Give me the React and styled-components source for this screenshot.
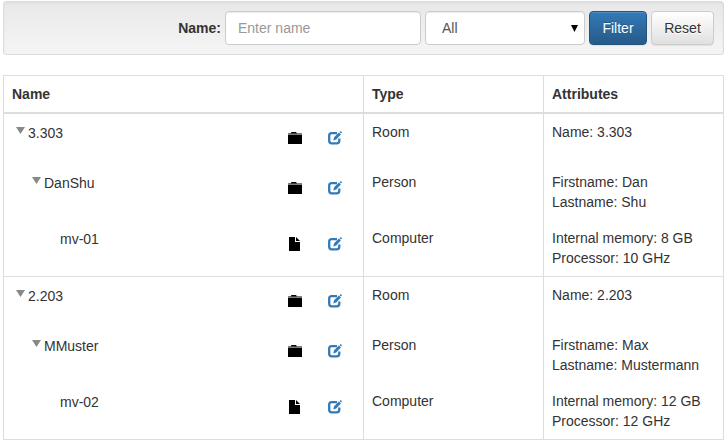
import React, { useState } from "react";
import styled, { createGlobalStyle } from "styled-components";

const GlobalStyle = createGlobalStyle`
  *, *::before, *::after { box-sizing: border-box; }
  body {
    margin: 0;
    background: #fff;
    color: #333;
    font-family: "Liberation Sans", Arial, sans-serif;
    font-size: 14px;
    line-height: 20px;
  }
`;

const Page = styled.main`
  padding: 1px 3px;
`;

const FilterBar = styled.form`
  display: flex;
  justify-content: flex-end;
  align-items: center;
  gap: 4px;
  margin: 0 0 20px;
  padding: 9px;
  border: 1px solid #dcdcdc;
  border-radius: 3px;
  background: linear-gradient(to bottom, #e8e8e8, #f5f5f5);
  box-shadow: inset 0 1px 3px rgba(0, 0, 0, 0.05);
`;

const Label = styled.label`
  font-weight: 700;
`;

const fieldStyle = `
  height: 34px;
  border: 1px solid #ccc;
  border-radius: 4px;
  background: #fff;
  color: #555;
  font: inherit;
  box-shadow: inset 0 1px 1px rgba(0, 0, 0, 0.075);
`;

const TextInput = styled.input`
  ${fieldStyle}
  width: 196px;
  padding: 6px 12px;
  &::placeholder { color: #999; opacity: 1; }
`;

const SelectBox = styled.div`
  position: relative;
  width: 160px;
`;

const Select = styled.select`
  ${fieldStyle}
  display: block;
  width: 100%;
  padding: 6px 16px;
  appearance: none;
`;

const SelectArrow = styled.svg`
  position: absolute;
  right: 7px;
  top: 14px;
  width: 7px;
  height: 7px;
  fill: #000;
  pointer-events: none;
`;

const Button = styled.button`
  min-width: ${(p) => (p.$primary ? "58px" : "63px")};
  height: 34px;
  padding: 6px 12px;
  border: 1px solid ${(p) => (p.$primary ? "#245580" : "#ccc")};
  border-radius: 4px;
  color: ${(p) => (p.$primary ? "#fff" : "#333")};
  background: ${(p) =>
    p.$primary
      ? "linear-gradient(to bottom, #337ab7, #265a88)"
      : "linear-gradient(to bottom, #fff, #e0e0e0)"};
  text-shadow: ${(p) => (p.$primary ? "0 -1px 0 rgba(0, 0, 0, 0.2)" : "0 1px 0 #fff")};
  box-shadow: inset 0 1px 0 rgba(255, 255, 255, 0.15), 0 1px 1px rgba(0, 0, 0, 0.075);
  font: inherit;
  cursor: pointer;
`;

const Table = styled.table`
  width: 100%;
  table-layout: fixed;
  border-collapse: collapse;
  border: 1px solid #ddd;
`;

const HeadCell = styled.th`
  width: ${(p) => p.$width};
  padding: 8px;
  border: 1px solid #ddd;
  border-bottom-width: 2px;
  text-align: left;
`;

const Row = styled.tr`
  border-top: ${(p) => (p.$root ? "1px solid #ddd" : "none")};
`;

const Cell = styled.td`
  padding: 8px;
  border-left: 1px solid #ddd;
  border-right: 1px solid #ddd;
  vertical-align: top;
`;

const NameLine = styled.div`
  display: flex;
  align-items: flex-start;
  padding-left: ${(p) => p.$level * 16}px;
`;

const Expander = styled.button`
  display: flex;
  flex: none;
  width: 16px;
  height: 20px;
  padding: 5px 4px;
  border: 0;
  background: none;
  cursor: pointer;
`;

const Spacer = styled.span`
  flex: none;
  width: 16px;
`;

const NodeName = styled.span`
  flex: 1;
  padding-top: 1px;
`;

const IconButton = styled.button`
  display: flex;
  align-items: flex-start;
  flex: none;
  width: 40px;
  height: 34px;
  padding: 9px 13px;
  border: 0;
  background: none;
  color: ${(p) => (p.$link ? "#337ab7" : "#000")};
  cursor: pointer;
`;

const Glyph = styled.svg`
  display: block;
  flex: none;
  width: 14px;
  height: 14px;
  fill: currentColor;
`;

const Triangle = styled.svg`
  display: block;
  flex: none;
  width: 9px;
  height: 7px;
  fill: #888;
`;

const FolderIcon = () => (
  <Glyph viewBox="0 0 14 14" aria-hidden="true">
    <path d="M0 2h14v2H0z" opacity=".5" />
    <path d="M2.5 2.5 3.5 1H8l1 1.5z" />
    <path d="M0 4h14v9H0z" />
  </Glyph>
);

const FileIcon = () => (
  <Glyph viewBox="0 0 14 14" aria-hidden="true">
    <path d="M1 0h6v5h5v9H1zM8 0l4 4H8z" />
  </Glyph>
);

const EditIcon = () => (
  <Glyph viewBox="0 0 14 14" aria-hidden="true">
    <path
      d="M9 2.2H3.7A2.5 2.5 0 0 0 1.2 4.7v5.1a2.5 2.5 0 0 0 2.5 2.5h5.1a2.5 2.5 0 0 0 2.5-2.5V7.6"
      fill="none"
      stroke="currentColor"
      strokeWidth="2.3"
    />
    <path d="m5.3 9.4.8-3.1 4.8-4.7 2 2-4.7 4.8zM11.5 1.1l.8-.7q.5-.4 1 .1l.3.3q.5.5.1 1l-.7.8z" />
  </Glyph>
);

const ROOMS = [
  { room: "3.303", person: "DanShu", first: "Dan", last: "Shu", computer: "mv-01", memory: "8 GB", cpu: "10 GHz" },
  { room: "2.203", person: "MMuster", first: "Max", last: "Mustermann", computer: "mv-02", memory: "12 GB", cpu: "12 GHz" },
];

const toNodes = (r) => [
  { name: r.room, type: "Room", attributes: [`Name: ${r.room}`] },
  { name: r.person, type: "Person", attributes: [`Firstname: ${r.first}`, `Lastname: ${r.last}`] },
  { name: r.computer, type: "Computer", attributes: [`Internal memory: ${r.memory}`, `Processor: ${r.cpu}`] },
];

function TreeRow({ node, level, onToggle }) {
  const leaf = level === 2;
  return (
    <Row $root={level === 0}>
      <Cell>
        <NameLine $level={level}>
          {leaf ? (
            <Spacer />
          ) : (
            <Expander type="button" aria-label={`Toggle ${node.name}`} onClick={onToggle}>
              <Triangle viewBox="0 0 9 7" aria-hidden="true">
                <path d="M0 0h9L4.5 7z" />
              </Triangle>
            </Expander>
          )}
          <NodeName>{node.name}</NodeName>
          <IconButton type="button" aria-label={`Open ${node.name}`}>
            {leaf ? <FileIcon /> : <FolderIcon />}
          </IconButton>
          <IconButton type="button" $link aria-label={`Edit ${node.name}`}>
            <EditIcon />
          </IconButton>
        </NameLine>
      </Cell>
      <Cell>{node.type}</Cell>
      <Cell>
        {node.attributes.map((text) => (
          <div key={text}>{text}</div>
        ))}
      </Cell>
    </Row>
  );
}

function RoomRows({ data }) {
  const [depth, setDepth] = useState(3);
  const toggle = (level) => setDepth((d) => (d > level + 1 ? level + 1 : 3));
  return toNodes(data)
    .slice(0, depth)
    .map((node, level) => (
      <TreeRow key={node.name} node={node} level={level} onToggle={() => toggle(level)} />
    ));
}

export default function App() {
  return (
    <>
      <GlobalStyle />
      <Page>
        <FilterBar onSubmit={(e) => e.preventDefault()}>
          <Label htmlFor="name">Name:</Label>
          <TextInput id="name" type="text" placeholder="Enter name" />
          <SelectBox>
            <Select aria-label="Type" defaultValue="all">
              <option value="all">All</option>
              <option>Room</option>
              <option>Person</option>
              <option>Computer</option>
            </Select>
            <SelectArrow viewBox="0 0 7 7" aria-hidden="true">
              <path d="M0 0h7L3.5 7z" />
            </SelectArrow>
          </SelectBox>
          <Button type="submit" $primary>Filter</Button>
          <Button type="reset">Reset</Button>
        </FilterBar>
        <Table>
          <thead>
            <tr>
              <HeadCell $width="50%">Name</HeadCell>
              <HeadCell $width="25%">Type</HeadCell>
              <HeadCell $width="25%">Attributes</HeadCell>
            </tr>
          </thead>
          <tbody>
            {ROOMS.map((r) => (
              <RoomRows key={r.room} data={r} />
            ))}
          </tbody>
        </Table>
      </Page>
    </>
  );
}
